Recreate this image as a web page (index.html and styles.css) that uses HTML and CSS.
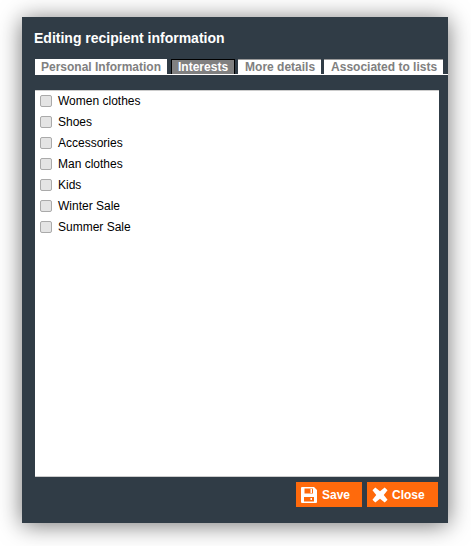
FILE: index.html
```html
<!DOCTYPE html>
<html lang="en">
  <head>
    <meta charset="UTF-8" />
    <meta name="viewport" content="width=device-width, initial-scale=1.0" />
    <title>Editing recipient information</title>
    <link rel="stylesheet" href="styles.css">
  </head>
  <body>
    <div class="dialog">
      <h2 class="dialog-title">Editing recipient information</h2>
      <ul class="tabs">
        <li class="tab tab-first">Personal Information</li>
        <li class="tab tab-active">Interests</li>
        <li class="tab">More details</li>
        <li class="tab">Associated to lists</li>
      </ul>
      <div class="panel">
        <label class="option"><input type="checkbox" /> Women clothes</label>
        <label class="option"><input type="checkbox" /> Shoes</label>
        <label class="option"><input type="checkbox" /> Accessories</label>
        <label class="option"><input type="checkbox" /> Man clothes</label>
        <label class="option"><input type="checkbox" /> Kids</label>
        <label class="option"><input type="checkbox" /> Winter Sale</label>
        <label class="option"><input type="checkbox" /> Summer Sale</label>
      </div>
      <div class="actions">
        <button class="btn btn-save" type="button">
          <svg width="16" height="16" viewBox="0 0 16 16">
            <path fill="#fff" fill-rule="evenodd" d="M1 0H13L16 3V15A1 1 0 0 1 15 16H1A1 1 0 0 1 0 15V1A1 1 0 0 1 1 0ZM3.500 1.500V6.500H12V1.500ZM3 10V14.500H13V10Z" />
            <path fill="#fff" d="M9.500 2H11V6H9.500ZM9.500 11H11V13H9.500Z" />
          </svg>
          Save
        </button>
        <button class="btn btn-close" type="button">
          <svg width="16" height="16" viewBox="0 0 17 17">
            <path fill="#fff" d="M3.500 0.500L8.500 4.500L13.500 0.500L16.500 3.500L12.500 8.500L16.500 13.500L13.500 16.500L8.500 12.500L3.500 16.500L0.500 13.500L4.500 8.500L0.500 3.500Z" />
          </svg>
          Close
        </button>
      </div>
    </div>
  </body>
</html>
```

FILE: styles.css
```css
html,
body {
  height: 100%;
}
body {
  margin: 0;
  background-color: white;
  font-family: "Liberation Sans", Arial, sans-serif;
  padding: 17px 23px 23px 22px;
  box-sizing: border-box;
}
.dialog {
  background-color: #303c46;
  box-shadow: 0 2px 22px rgba(0, 0, 0, 0.55);
  height: 506px;
  padding: 0 9px 0 13px;
  box-sizing: border-box;
  display: flex;
  flex-direction: column;
}
.dialog-title {
  margin: 12px 0 12px -1px;
  color: white;
  font-size: 14px;
  line-height: 18px;
  font-weight: bold;
}
.tabs {
  list-style: none;
  margin: 0 -9px 15px 0;
  padding: 0;
  display: flex;
  gap: 3px;
  border-bottom: 1px solid white;
  height: 15px;
}
.tab {
  background-color: white;
  border-top: 1px solid #999;
  color: #808080;
  font-size: 12px;
  font-weight: bold;
  line-height: 14px;
  padding: 0 6px 0 7px;
  white-space: nowrap;
}
.tab-first {
  border-top-color: white;
  padding: 0 6px;
  margin-right: 1px;
}
.tab-active {
  background-color: #808080;
  border-top-color: black;
  border-left: 1px solid black;
  border-right: 1px solid black;
  color: white;
  padding: 0 6px;
}
.panel {
  background-color: white;
  box-shadow: inset 0 1px 0 #ccc, inset 0 -1px 0 #ccc;
  width: 404px;
  height: 387px;
  box-sizing: border-box;
  padding: 0 5px;
  display: flex;
  flex-direction: column;
}
.option {
  display: flex;
  align-items: center;
  height: 21px;
  gap: 6px;
  font-size: 12px;
  color: black;
}
.option input {
  appearance: none;
  margin: 0;
  width: 12px;
  height: 12px;
  background-color: #e4e4e4;
  border: 1px solid #aaa;
  border-radius: 2px;
  box-sizing: border-box;
}
.actions {
  display: flex;
  justify-content: flex-end;
  gap: 5px;
  width: 403px;
  margin-top: 5px;
}
.btn {
  background-color: #ff6a0c;
  color: white;
  border: none;
  height: 25px;
  padding: 0 0 0 5px;
  font-family: inherit;
  font-size: 12px;
  font-weight: bold;
  display: flex;
  align-items: center;
  gap: 5px;
}
.btn-save {
  width: 66px;
}
.btn-close {
  width: 71px;
  gap: 4px;
}
```
